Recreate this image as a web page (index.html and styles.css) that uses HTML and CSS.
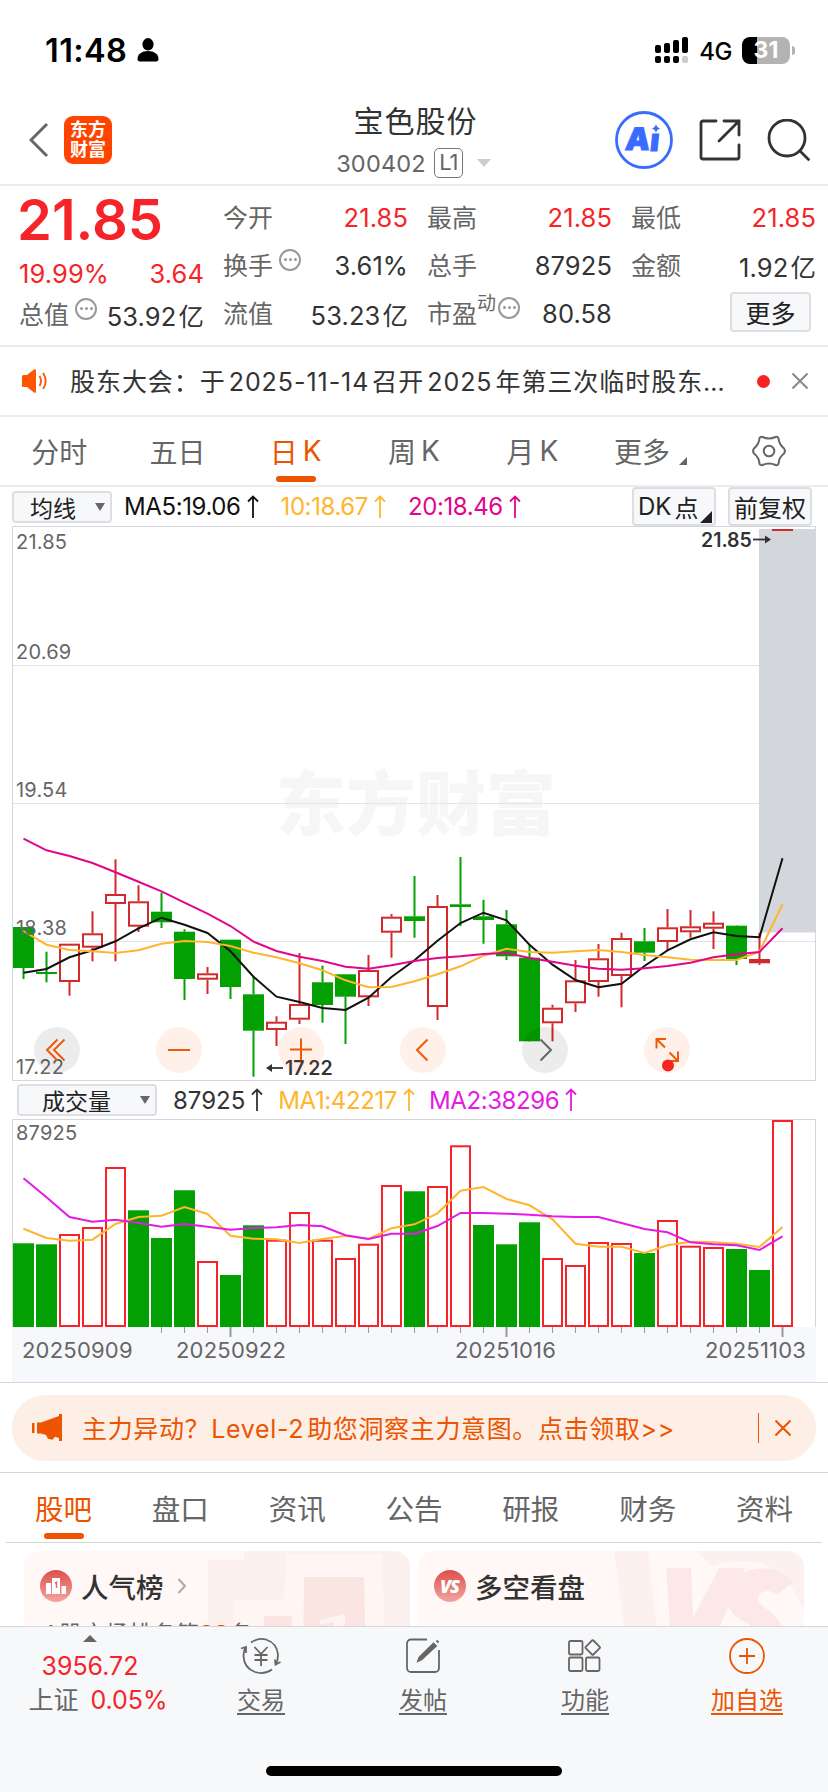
FILE: index.html
```html
<!DOCTYPE html>
<html lang="zh-CN">
<head>
    <meta charset="UTF-8">
    <meta name="viewport" content="width=device-width, initial-scale=1.0">
    <title>宝色股份 300402</title>
    <link rel="stylesheet" href="styles.css">
</head>
<body>
<div class="page">
    <!-- Status bar -->
    <div class="status">
        <span class="clock">11:48</span>
        <svg class="person" width="22" height="24" viewBox="0 0 22 24"><ellipse cx="11" cy="6.3" rx="5.6" ry="6.2"/><path d="M0.5 21c0-5 4.500-8 10.500-8s10.500 3 10.500 8c0 1.500-.8 2.500-2.500 2.500H3C1.300 23.500.5 22.500.5 21z"/></svg>
        <svg class="signal" width="34" height="27" viewBox="0 0 34 27">
            <rect x="0" y="8" width="6" height="8" rx="2"/><rect x="9" y="6" width="6" height="10" rx="2"/><rect x="18" y="3" width="6" height="13" rx="2"/><rect x="27" y="0" width="6" height="16" rx="2"/>
            <rect x="0" y="19" width="6" height="7" rx="2"/><rect x="9" y="19" width="6" height="7" rx="2"/><rect x="18" y="19" width="6" height="7" rx="2"/><rect x="27" y="19" width="6" height="7" rx="2" fill="#ccc"/>
        </svg>
        <span class="net">4G</span>
        <span class="battery">31</span>
        <span class="battery-cap"></span>
    </div>

    <!-- Header -->
    <header class="header">
        <svg class="back" width="20" height="36" viewBox="0 0 20 36"><path d="M18 2L2 18l16 16"/></svg>
        <div class="logo"><span>东方</span><span>财富</span></div>
        <div class="title">
            <h1>宝色股份</h1>
            <div class="code">300402<span class="level">L1</span><i class="caret"></i></div>
        </div>
        <svg class="ai" width="58" height="58" viewBox="0 0 58 58">
            <circle cx="29" cy="29" r="27.500" fill="none" stroke="#3a6bff" stroke-width="2.800"/>
            <g transform="translate(4.500) skewX(-6)"><text x="9" y="39">A</text><text x="34" y="40">ı</text></g>
            <path d="M41 13q.8 3.600 4.500 4.500-3.700.9-4.500 4.500-.8-3.600-4.500-4.500 3.700-.9 4.500-4.500z" fill="#3a6bff"/>
        </svg>
        <svg class="share" width="42" height="42" viewBox="0 0 42 42"><path d="M17 2H4a2 2 0 0 0-2 2v34a2 2 0 0 0 2 2h34a2 2 0 0 0 2-2V26M25 2h15v14M39 3L20 22"/></svg>
        <svg class="search" width="44" height="42" viewBox="0 0 44 42"><circle cx="20" cy="19" r="18"/><path d="M33 32l8.500 8.500"/></svg>
    </header>

    <!-- Quote -->
    <section class="quote">
        <div class="col first">
            <div class="price">21.85</div>
            <div class="row up"><span>19.99%</span><span>3.64</span></div>
            <div class="row"><label>总值<i class="tip"></i></label><b>53.92<em>亿</em></b></div>
        </div>
        <div class="col">
            <div class="row up"><label>今开</label><b>21.85</b></div>
            <div class="row"><label>换手<i class="tip"></i></label><b>3.61%</b></div>
            <div class="row"><label>流值</label><b>53.23<em>亿</em></b></div>
        </div>
        <div class="col">
            <div class="row up"><label>最高</label><b>21.85</b></div>
            <div class="row"><label>总手</label><b>87925</b></div>
            <div class="row"><label>市盈<sup>动</sup><i class="tip near"></i></label><b>80.58</b></div>
        </div>
        <div class="col">
            <div class="row up"><label>最低</label><b>21.85</b></div>
            <div class="row"><label>金额</label><b>1.92<em>亿</em></b></div>
            <div class="row end"><button class="more">更多</button></div>
        </div>
    </section>

    <!-- Notice -->
    <section class="notice">
        <svg width="28" height="24" viewBox="0 0 28 24"><path d="M1 7.500Q1 6 2.500 6H6l7-5.500q2-1 2 1v21q0 2-2 1L6 18H2.500Q1 18 1 16.500z" fill="#ff5500"/><path d="M18.500 7q3 5 0 10M22 4q5.500 8 0 16" fill="none" stroke="#ff5500" stroke-width="1.800"/></svg>
        <p>股东大会：于<span>2025-11-14</span>召开<span>2025</span>年第三次临时股东…</p>
        <i class="dot"></i>
        <svg class="close" width="16" height="16" viewBox="0 0 16 16"><path d="M.5.5l15 15M15.500.5l-15 15"/></svg>
    </section>

    <!-- Period tabs -->
    <nav class="periods">
        <a>分时</a>
        <a>五日</a>
        <a class="active">日<span>K</span></a>
        <a>周<span>K</span></a>
        <a>月<span>K</span></a>
        <a>更多<i class="corner"></i></a>
        <a><svg width="34" height="32" viewBox="0 0 34 32"><path d="M10.500 2Q17 5 23.500 2 25.500 1.200 26.500 3.200 27 9.500 31.800 13.200 34 16 31.800 18.800 27 22.500 26.500 28.800 25.500 30.800 23.500 30 17 27 10.500 30 8.500 30.800 7.500 28.800 7 22.500 2.200 18.800 0 16 2.200 13.200 7 9.500 7.500 3.200 8.500 1.200 10.500 2z"/><circle cx="17" cy="16" r="5.300"/></svg></a>
    </nav>

    <!-- K line -->
    <div class="ma-bar">
        <span class="select">均线<i></i></span>
        <span class="ma5">MA5:19.06<svg class="arrow" viewBox="0 0 12 24"><path d="M6 23V1.500M1 6.500l5-5 5 5"/></svg></span>
        <span class="ma10">10:18.67<svg class="arrow" viewBox="0 0 12 24"><path d="M6 23V1.500M1 6.500l5-5 5 5"/></svg></span>
        <span class="ma20">20:18.46<svg class="arrow" viewBox="0 0 12 24"><path d="M6 23V1.500M1 6.500l5-5 5 5"/></svg></span>
        <button class="dk">DK<span>点</span><i></i></button>
        <button class="fq">前复权</button>
    </div>
    <div class="kline">
        <svg id="kline" width="804" height="555" viewBox="0 0 804 555"></svg>
        <div class="tools">
            <span class="off"><svg viewBox="0 0 46 46"><path d="M23.500 12.500L13 23l10.500 10.500M30.500 12.500L20 23l10.500 10.500"/></svg></span>
            <span><svg viewBox="0 0 46 46"><path d="M12 23h22"/></svg></span>
            <span><svg viewBox="0 0 46 46"><path d="M12 22.500h22M23 11.500v22"/></svg></span>
            <span><svg viewBox="0 0 46 46"><path d="M27.500 12.500L17 23l10.500 10.500"/></svg></span>
            <span class="off next"><svg viewBox="0 0 46 46"><path d="M18.500 12.500L29 23 18.500 33.500"/></svg></span>
            <span><svg viewBox="0 0 46 46"><path d="M12.500 21.500v-9.500H22M13 12.500l8 8M34 24.500V34h-9.500M33.500 33.500l-8-8"/><circle cx="24" cy="38.500" r="6" fill="#f62420" stroke="none"/></svg></span>
        </div>
    </div>

    <!-- Volume -->
    <div class="vol-bar">
        <span class="select">成交量<i></i></span>
        <span class="vol">87925<svg class="arrow" viewBox="0 0 12 24"><path d="M6 23V1.500M1 6.500l5-5 5 5"/></svg></span>
        <span class="ma10">MA1:42217<svg class="arrow" viewBox="0 0 12 24"><path d="M6 23V1.500M1 6.500l5-5 5 5"/></svg></span>
        <span class="vol2">MA2:38296<svg class="arrow" viewBox="0 0 12 24"><path d="M6 23V1.500M1 6.500l5-5 5 5"/></svg></span>
    </div>
    <div class="volume">
        <svg id="volume" width="804" height="263" viewBox="0 0 804 263"></svg>
    </div>

    <!-- Promo -->
    <section class="promo">
        <div class="pill">
            <svg width="32" height="28" viewBox="0 0 32 28"><path d="M0 9h2.500v10H0zM5 8.500h4L27 2V0h3v27h-3v-3l-4-1.300-2.500 3-4.500-1-2-3.700L9 19.500H5z" fill="#ec5400"/></svg>
            <p>主力异动？<span>Level-2</span>助您洞察主力意图。点击领取&gt;&gt;</p>
            <i></i>
            <svg class="close" width="16" height="16" viewBox="0 0 16 16"><path d="M.5.5l15 15M15.500.5l-15 15"/></svg>
        </div>
    </section>

    <!-- Info tabs -->
    <nav class="info">
        <a class="active">股吧</a>
        <a>盘口</a>
        <a>资讯</a>
        <a>公告</a>
        <a>研报</a>
        <a>财务</a>
        <a>资料</a>
    </nav>

    <div class="cards">
        <div class="card">
            <svg class="art" width="386" height="120" viewBox="0 0 386 120">
                <path d="M184 9h36V0h166v120H210V49h50V3h96v117h-60V49h-86v71h-26z" fill="#fdf1ef"/>
                <path d="M262 3h96l4 117H210V49h50z" fill="#fff5f2"/>
                <path d="M280 26h60l2 94h-63zM240 65h28v55h-28z" fill="#fae5e3"/>
                <path d="M296 69l25-6v57h-11V71l-14 3z" fill="#fdf3f1"/>
            </svg>
            <h3>
                <svg width="32" height="32" viewBox="0 0 32 32"><circle cx="16" cy="16" r="16" fill="url(#badge)"/><path d="M6 13h5v11H6zM12 8h8v16h-8zM21.500 16h4.500v8h-4.500z" fill="#fff"/><path d="M15 13l1.500-.7V18" fill="none" stroke="#e06a66" stroke-width="1.500"/></svg>
                人气榜
                <svg class="go" width="10" height="18" viewBox="0 0 10 18"><path d="M1.500 2l6.500 7-6.500 7"/></svg>
            </h3>
            <p>A股市场排名第<b>28</b>名</p>
        </div>
        <div class="card">
            <svg class="art" width="386" height="120" viewBox="0 0 386 120">
                <path d="M196 0h34l14 120h-32zM278 0h108v60q-20-50-60-50-20 0-32 6z" fill="#fdf1ef"/>
                <path d="M248 17h25l2 50 26-50h26l-44 103h-28z" fill="#fce9e7"/>
                <path d="M375 31q-15-17-38-13-27 4-28 28-1 17 20 26 9 5 2 14l-22 12v20h40q20-12 16-38-3-13-19-24-10-7-3-14 8-5 16 2z" fill="#fce9e7"/>
            </svg>
            <h3>
                <svg width="32" height="32" viewBox="0 0 32 32">
                    <defs><linearGradient id="badge" x1="0" y1="0" x2="0" y2="1"><stop offset="0" stop-color="#dc4f4b"/><stop offset="1" stop-color="#f3a5a1"/></linearGradient></defs>
                    <circle cx="16" cy="16" r="16" fill="url(#badge)"/><text x="15.500" y="23" class="vs">VS</text>
                </svg>
                多空看盘
            </h3>
        </div>
    </div>

    <!-- Bottom bar -->
    <footer class="bottom">
        <div class="index">
            <i></i>
            <div class="up">3956.72</div>
            <div class="line">上证 <span class="up">0.05%</span></div>
        </div>
        <a>
            <svg width="42" height="38" viewBox="0 0 42 38"><path d="M11 5.500Q18 .5 26 2.500 37.500 6.500 38 18q0 5-2 9M32 32.500Q24 38 15 35 4 31 3.500 19q0-4 1.500-8M1 11.500l5-1.500v6M40.500 25l-5 2.500-.5-5M14.500 10l6.500 7 6.500-7M21 17v12M14.500 18h13M14.500 23h13"/></svg>
            <span>交易</span>
        </a>
        <a>
            <svg width="42" height="38" viewBox="0 0 42 38"><path d="M25 2.500H9a4 4 0 0 0-4 4V31a4 4 0 0 0 4 4h24a4 4 0 0 0 4-4V13"/><path d="M31.500 6.500l2.500 2.500L19.500 22.500 16 24l1.500-3.800zM34.500 3.500l2 2" fill="#666"/></svg>
            <span>发帖</span>
        </a>
        <a>
            <svg width="42" height="38" viewBox="0 0 42 38"><rect x="5" y="4" width="13.500" height="13.500" rx="1.500"/><rect x="5" y="20.500" width="13.500" height="13.500" rx="1.500"/><rect x="22" y="20.500" width="13.500" height="13.500" rx="1.500"/><path d="M28 3.500q.7-.7 1.400 0l6.300 6.300q.7.7 0 1.400l-6.300 6.300q-.7.7-1.400 0l-6.300-6.300q-.7-.7 0-1.400z"/></svg>
            <span>功能</span>
        </a>
        <a class="add">
            <svg width="42" height="38" viewBox="0 0 42 38"><circle cx="21" cy="19" r="17"/><path d="M13 19h16M21 11v16"/></svg>
            <span>加自选</span>
        </a>
        <div class="home"></div>
    </footer>
</div>
<script src="chart.js"></script>
</body>
</html>
```
FILE: styles.css
```css
* {
    box-sizing: border-box;
}

body {
    margin: 0;
    background: #fff;
    color: #333;
    font-family: Inter, "Noto Sans CJK SC", sans-serif;
    font-size: 25px;
}

h1, h3, p {
    margin: 0;
    font-weight: 400;
}

b, em, i {
    font-weight: 400;
    font-style: normal;
}

button {
    font: inherit;
    color: #222;
    padding: 0;
    background: #f7f8fa;
    border: 2px solid #dcdee3;
    border-radius: 4px;
}

svg {
    display: block;
    flex: none;
}

.page {
    display: flex;
    flex-direction: column;
    width: 828px;
    height: 1792px;
    overflow: hidden;
}

.page > * {
    flex: none;
}

.up, .up b {
    color: #f62429;
}

/* status bar */
.status {
    display: flex;
    align-items: center;
    height: 100px;
    padding: 0 33px 0 45px;
    color: #000;
}

.clock {
    font-size: 32.500px;
    font-weight: 600;
    width: 92px;
    letter-spacing: 0.4px;
}

.signal {
    margin-left: auto;
}

.net {
    margin: 2px 10px 0 10px;
    font-size: 24px;
    font-weight: 500;
    letter-spacing: -0.5px;
}

.battery {
    width: 48px;
    height: 27px;
    border-radius: 8px;
    background: linear-gradient(90deg, #000 31%, #b3b3b3 31%);
    color: #fff;
    font-size: 23px;
    font-weight: 700;
    line-height: 27px;
    text-align: center;
}

.battery-cap {
    width: 3px;
    height: 9px;
    margin-left: 2px;
    border-radius: 0 4px 4px 0;
    background: #b3b3b3;
}

/* header */
.header {
    display: flex;
    align-items: center;
    height: 86px;
    padding: 0 17px 4px 29px;
    border-bottom: 2px solid #ececee;
}

.back {
    fill: none;
    stroke: #666;
    stroke-width: 3;
}

.logo {
    display: flex;
    flex-direction: column;
    justify-content: center;
    width: 48px;
    height: 48px;
    margin-left: 15px;
    border-radius: 9px;
    background: #ff4400;
    color: #fff;
    font-size: 18px;
    font-weight: 700;
    line-height: 20px;
    text-align: center;
}

.title {
    flex: 1;
    padding: 8px 0 0 108px;
    text-align: center;
}

.title h1 {
    font-size: 30px;
    line-height: 38px;
    letter-spacing: 1px;
    margin-left: -4px;
}

.code {
    display: flex;
    justify-content: center;
    align-items: center;
    height: 46px;
    margin-left: -8px;
    font-size: 23.500px;
    color: #666;
    letter-spacing: 0.2px;
}

.level {
    width: 29px;
    height: 30px;
    margin: 0 14px 0 8px;
    border: 1.500px solid #777;
    border-radius: 5px;
    font-size: 22px;
    line-height: 27px;
    letter-spacing: -1px;
}

.caret {
    border: 7px solid transparent;
    border-top: 8px solid #ccc;
    border-bottom: 0;
}

.ai text {
    font-family: Inter, sans-serif;
    font-size: 31px;
    font-weight: 900;
    fill: #3a6bff;
    stroke: #3a6bff;
    stroke-width: 1;
}

.share, .search {
    margin-left: 26px;
    fill: none;
    stroke: #333;
    stroke-width: 2.800;
    stroke-linecap: round;
}

/* quote */
.quote {
    display: grid;
    grid-template-columns: repeat(4, 184px);
    column-gap: 20px;
    height: 161px;
    padding: 7px 13px 0 19px;
    border-bottom: 2px solid #ececee;
}

.row {
    display: flex;
    justify-content: space-between;
    align-items: center;
    height: 48px;
    white-space: nowrap;
}

.row b, .row > span {
    margin-right: -1px;
    font-size: 25.500px;
    letter-spacing: 0.1px;
}

.row label {
    display: flex;
    align-items: center;
    margin-top: -2px;
    color: #666;
}

.row em {
    margin-left: 2px;
}

.price {
    height: 56px;
    margin-left: -2px;
    color: #f62429;
    font-size: 56px;
    font-weight: 600;
    line-height: 54px;
}

.first .row:last-child {
    height: 34px;
}

.row sup {
    align-self: flex-start;
    font-size: 19px;
    line-height: 20px;
}

.tip {
    display: grid;
    place-items: center;
    width: 22px;
    height: 22px;
    margin: -9px 0 0 6px;
    border: 2px solid #999;
    border-radius: 50%;
}

.tip::before {
    content: "";
    width: 3px;
    height: 3px;
    border-radius: 50%;
    background: #999;
    box-shadow: -5px 0 #999, 5px 0 #999;
}

.tip.near {
    margin-left: 2px;
}

.row.end {
    justify-content: flex-end;
}

.more {
    width: 81px;
    height: 40px;
    margin: -3px 4px 0 0;
}

/* notice */
.notice {
    display: flex;
    align-items: center;
    height: 70px;
    padding: 0 20px 0 21px;
    border-bottom: 2px solid #ececee;
}

.notice p {
    width: 665px;
    margin: -2px 0 0 21px;
    letter-spacing: 0.950px;
    white-space: nowrap;
}

.notice p span {
    margin: 0 3px;
}

.dot {
    width: 13px;
    height: 13px;
    margin: 0 auto 0 22px;
    border-radius: 50%;
    background: #f62420;
}

.close {
    fill: none;
    stroke: #888;
    stroke-width: 2;
}

/* tabs */
.periods {
    display: grid;
    grid-template-columns: repeat(7, 1fr);
    height: 70px;
    border-bottom: 2px solid #ececee;
    font-size: 28px;
    color: #666;
}

.periods a, .info a {
    position: relative;
    display: flex;
    align-items: center;
    justify-content: center;
}

.periods a span {
    margin-left: 5px;
}

.periods svg {
    fill: none;
    stroke: #666;
    stroke-width: 2;
}

.corner {
    margin: 19px 0 0 9px;
    border: 4.500px solid #666;
    border-top-color: transparent;
    border-left-color: transparent;
}

a.active {
    color: #ec5400;
}

a.active::after {
    content: "";
    position: absolute;
    left: 50%;
    bottom: 3px;
    width: 40px;
    height: 6px;
    margin-left: -20px;
    border-radius: 3px;
    background: #ec5400;
}

/* indicator bars */
.ma-bar, .vol-bar {
    display: flex;
    align-items: center;
    height: 39px;
    padding: 0 16px 0 12px;
    font-size: 24px;
    letter-spacing: -0.4px;
    white-space: nowrap;
}

.vol-bar {
    height: 38px;
    padding-left: 17px;
}

.ma-bar > span, .vol-bar > span {
    display: flex;
    align-items: center;
}

.select {
    width: 100px;
    height: 32px;
    padding-left: 16px;
    background: #f7f8fa;
    border: 2px solid #dcdee3;
    border-radius: 4px;
    color: #222;
    font-size: 23px;
    letter-spacing: 0;
}

.vol-bar .select {
    width: 140px;
    padding-left: 23px;
}

.select i {
    margin: 0 5px 0 auto;
    border: 5px solid transparent;
    border-top: 8px solid #666;
    border-bottom: 0;
}

.arrow {
    width: 12px;
    height: 24px;
    margin-left: 6px;
    fill: none;
    stroke: currentColor;
    stroke-width: 1.800;
}

.ma5 { color: #111; margin-left: 12px; }
.ma10 { color: #ffb52e; margin-left: 22px; }
.ma20 { color: #e2068a; margin-left: 22px; }
.vol { margin-left: 16px; letter-spacing: 0; }
.vol-bar .ma10 { margin-left: 15px; }
.vol2 { color: #e31be3; margin-left: 14px; }

.ma-bar button {
    height: 39px;
    width: 84px;
    letter-spacing: 0;
}

.ma-bar .dk {
    display: flex;
    align-items: center;
    margin: 0 12px 0 auto;
    padding-left: 4px;
}

.dk span {
    margin-left: 3px;
}

.dk i {
    margin: 20px 0 0 2px;
    border: 6px solid #222;
    border-top-color: transparent;
    border-left-color: transparent;
}

/* charts */
.kline {
    position: relative;
    height: 555px;
    margin-left: 12px;
}

.tools {
    position: absolute;
    left: 22px;
    top: 501px;
    display: flex;
    gap: 76px;
}

.tools span {
    width: 46px;
    height: 46px;
    border-radius: 50%;
    background: rgba(255, 110, 40, 0.1);
}

.tools .off {
    background: rgba(0, 0, 0, 0.075);
}

.tools svg {
    fill: none;
    stroke: #ee5a0a;
    stroke-width: 2;
}

.tools .next svg {
    stroke: #666;
}

.volume {
    height: 264px;
    padding-left: 12px;
    border-bottom: 1px solid #d5d6dc;
}

.frame { fill: none; stroke: #d5d6dc; }
.grid { stroke: #e4e4e8; }
.scale { fill: #666; font-size: 20px; letter-spacing: 0.2px; }
.date { fill: #666; font-size: 22px; letter-spacing: 0.2px; }
.mark { fill: #333; font-size: 19.500px; font-weight: 600; }
.pointer { fill: none; stroke: #333; stroke-width: 1.800; }
.watermark { fill: #f6f6f6; font-size: 70px; font-weight: 900; }
.ma { fill: none; stroke-width: 2; }

/* promo */
.promo {
    height: 90px;
    padding: 12px;
    border-bottom: 1px solid #d5d6dc;
}

.pill {
    display: flex;
    align-items: center;
    height: 66px;
    padding: 0 25px 0 20px;
    border-radius: 33px;
    background: #fdeee6;
    color: #ec5400;
}

.pill p {
    margin: -2px 0 0 18px;
    letter-spacing: 0.650px;
    white-space: nowrap;
}

.pill p span {
    margin: 0 3px 0 1px;
}

.pill i {
    width: 1px;
    height: 30px;
    margin: 0 16px 0 auto;
    background: #ec5400;
}

.pill .close {
    stroke: #ec5400;
}

/* info */
.info {
    display: flex;
    justify-content: space-between;
    height: 70px;
    margin: 0 6px;
    padding: 0 29px;
    border-bottom: 1px solid #d5d6dc;
    font-size: 28.500px;
    color: #666;
}

.cards {
    display: flex;
    gap: 8px;
    height: 83px;
    padding: 8px 24px 0;
    overflow: hidden;
}

.card {
    position: relative;
    width: 386px;
    height: 120px;
    padding: 15px 16px;
    border-radius: 16px;
    background: #fff8f6;
    overflow: hidden;
}

.art {
    position: absolute;
    left: 0;
    top: 0;
}

.card h3 {
    position: relative;
    display: flex;
    align-items: center;
    gap: 9px;
    height: 40px;
    font-size: 27.500px;
    font-weight: 500;
}

.go {
    margin-left: 4px;
    fill: none;
    stroke: #aaa;
    stroke-width: 2;
}

.vs {
    font: italic 900 18px "Open Sans", Inter, sans-serif;
    letter-spacing: -1px;
    fill: #fff;
    text-anchor: middle;
}

.card p {
    position: relative;
    margin: 9px 0 0 3px;
    color: #666;
    font-size: 23px;
    letter-spacing: 0.3px;
}

.card p b {
    color: #ec4a10;
    font-weight: 700;
}

/* bottom bar */
.bottom {
    position: relative;
    display: grid;
    grid-template-columns: 180px repeat(4, 162px);
    height: 166px;
    border-top: 1px solid #d5d6dc;
    background: #f7f8fa;
    color: #666;
}

.index {
    display: flex;
    flex-direction: column;
    align-items: center;
    padding-top: 8px;
}

.index i {
    border: 7px solid transparent;
    border-bottom: 7px solid #666;
    border-top: 0;
}

.index div {
    height: 34px;
    line-height: 34px;
    margin-top: 7px;
}

.index .line {
    display: flex;
    gap: 12px;
    margin: 0 0 0 16px;
}

.bottom a {
    display: flex;
    flex-direction: column;
    align-items: center;
    padding-top: 10px;
    font-size: 24px;
}

.bottom a svg {
    fill: none;
    stroke: #666;
    stroke-width: 1.800;
}

.bottom a span {
    margin-top: 13px;
    line-height: 25px;
    border-bottom: 2px solid;
}

.bottom .add {
    color: #ec5400;
}

.bottom .add svg {
    stroke: #ec5400;
}

.home {
    position: absolute;
    left: 266px;
    bottom: 16px;
    width: 296px;
    height: 10px;
    border-radius: 5px;
    background: #000;
}
```
FILE: chart.js
```js
const STEP = 23;
const BAR = 21;
const RED = '#d2292d';
const GREEN = '#02a002';

// [up, body top, body bottom, high, low]
const candles = [
    [0, 401, 442, 401, 453], [0, 446, 448, 425.7, 456.3], [1, 417.7, 456, 417.7, 469.7], [1, 407.3, 421.7, 385.3, 435.3],
    [1, 368, 378, 333.3, 435.3], [1, 375.3, 400.7, 359.3, 406], [0, 385.7, 396.3, 366.7, 402], [0, 405.7, 453, 403.3, 474],
    [1, 447.3, 453.7, 441, 468], [0, 413.7, 461, 413.7, 473], [0, 468.3, 504.7, 450.7, 550.7], [1, 495.7, 504, 490.3, 520],
    [1, 478, 493.7, 427, 498], [0, 456.3, 479, 439.7, 496.7], [0, 448.3, 470.7, 448.3, 518], [1, 444, 471.3, 429, 480],
    [1, 390.7, 406.7, 388, 431.7], [0, 390.3, 395, 350, 411.7], [1, 380, 481, 369, 494], [0, 378.3, 381, 331, 400],
    [0, 390.3, 394, 373.7, 417.7], [0, 398.3, 430.3, 384, 434], [0, 431.7, 515.3, 419, 515.7], [1, 481.7, 497.3, 478.7, 515.3],
    [1, 454.3, 477.3, 434, 486], [1, 432.3, 456, 418, 470.7], [1, 412, 450, 406.7, 481.3], [0, 415.3, 426.7, 402, 435],
    [1, 401.3, 416, 383, 424.7], [1, 400.3, 406.3, 384, 411.7], [1, 396.7, 402.7, 385.3, 423], [0, 399.7, 433, 399.3, 439],
    [1, 433, 437.3, 406.7, 439], [1, 3, 5, 3, 5]
];
const ma5 = [446.7, 443, 431.3, 424.3, 415.3, 402.3, 391.7, 398.7, 407, 425.3, 450.7, 470.7, 476, 482, 484, 471.7, 451, 434.3, 414.7, 397, 386.7, 394.3, 418.7, 438.7, 454, 461.3, 457.7, 440, 424.3, 413.3, 406.3, 410, 411.3, 332.3];
const ma10 = [405, 418.7, 424, 425.3, 427, 424.3, 417.7, 415, 416, 420, 426.7, 431.3, 437.3, 444.3, 454.3, 461.3, 461, 455.3, 448.3, 440.3, 429.7, 422.7, 426, 426.7, 425.3, 424, 426, 429, 431.3, 433.7, 434, 434, 425.7, 378.3];
const ma20 = [312.7, 324.3, 330, 337, 346.3, 355.7, 365.3, 376.7, 387.7, 400, 415.7, 425, 430.7, 435, 440.7, 442.7, 439.3, 435, 432, 430.3, 428, 427, 432, 435.7, 439.7, 442.7, 443.7, 442.3, 440, 436.7, 431.3, 428.3, 426, 402.3];

const volumes = [124.3, 125.3, 115, 108, 48, 91.3, 119, 71.3, 142, 156, 106.3, 120.7, 93, 120.7, 139, 124.7, 66, 72.3, 67, 26.3, 106, 125.3, 103.3, 139, 146, 123, 124, 134, 101, 126.7, 128, 130, 151, 1];
const downDays = [0, 1, 5, 6, 7, 9, 10, 17, 20, 21, 22, 27, 31, 32];
const vma1 = [109.7, 119, 121.7, 120.7, 105, 98, 96.7, 88, 95, 116.7, 119.7, 120.3, 124, 120, 116.7, 120, 109.3, 105.3, 94.3, 71.7, 68, 80, 86.3, 100.3, 124.7, 127.7, 127.7, 134, 126.3, 122.7, 123.3, 124.7, 128, 108];
const vma2 = [59.3, 78.3, 98, 102.7, 100.7, 104, 107.7, 105, 107.7, 110.7, 109, 108.3, 106, 107.3, 116.3, 120, 114.7, 114.7, 107, 94, 94, 94.7, 95.7, 97.3, 98, 98, 104, 110, 113.3, 123.3, 125.3, 126.3, 131, 117.3];

const cx = i => 11.5 + i * STEP;

function line(values, color) {
    const pts = values.map((y, i) => cx(i) + ',' + y).join(' ');
    return `<polyline class="ma" stroke="${color}" points="${pts}"/>`;
}

function bar(i, top, bottom, up, color) {
    const x = cx(i) - BAR / 2;
    if (up && bottom - top > 5) {
        return `<rect x="${x + 1}" y="${top + 1}" width="${BAR - 2}" height="${bottom - top - 2}" fill="none" stroke="${color}" stroke-width="2"/>`;
    }
    return `<rect x="${x}" y="${top}" width="${BAR}" height="${bottom - top}" fill="${color}"/>`;
}

function drawKline() {
    let s = '<text class="watermark" x="264" y="304">东方财富</text>';
    [139.5, 277.5, 415.5].forEach(y => {
        s += `<path class="grid" d="M0 ${y}H804"/>`;
    });
    s += '<rect x="747" y="3" width="57" height="403.5" fill="#d3d6db"/>';
    s += '<rect class="frame" x=".5" y=".5" width="803" height="554"/>';
    candles.forEach(([up, top, bottom, high, low], i) => {
        const color = up ? RED : GREEN;
        if (high < top) s += `<path d="M${cx(i)} ${high}V${top}" stroke="${color}" stroke-width="2"/>`;
        if (low > bottom) s += `<path d="M${cx(i)} ${bottom}V${low}" stroke="${color}" stroke-width="2"/>`;
        s += bar(i, top, bottom, up, color);
    });
    s += line(ma5, '#111') + line(ma10, '#ffb52e') + line(ma20, '#e2068a');
    [['21.85', 23], ['20.69', 133], ['19.54', 271], ['18.38', 409], ['17.22', 548]].forEach(([t, y]) => {
        s += `<text class="scale" x="4" y="${y}">${t}</text>`;
    });
    s += '<text class="mark" x="689" y="21">21.85</text><path class="pointer" d="M741 13.5H757"/><path d="M753 9.5l6 4-6 4z" fill="#333"/>';
    s += '<text class="mark" x="273" y="549">17.22</text><path class="pointer" d="M257 542H271"/><path d="M260 538l-6 4 6 4z" fill="#333"/>';
    document.getElementById('kline').innerHTML = s;
}

function drawVolume() {
    let s = '<rect y="208" width="804" height="55" fill="#f7f8fb"/>';
    s += '<path class="frame" d="M.5 208V.5H803.5V208"/>';
    volumes.forEach((top, i) => {
        const up = !downDays.includes(i);
        s += bar(i, top, 208, up, up ? '#f62429' : GREEN);
        if (i > 5) {
            const major = i === 9 || i === 21 || i === 33;
            s += `<path d="M${cx(i)} 208v${major ? 10 : 6}" stroke="#999" stroke-width="${major ? 2 : 1}"/>`;
        }
    });
    s += line(vma1, '#ffb52e') + line(vma2, '#e31be3');
    s += '<text class="scale" x="4" y="21">87925</text>';
    [['20250909', 10], ['20250922', 164], ['20251016', 443], ['20251103', 693]].forEach(([t, x]) => {
        s += `<text class="date" x="${x}" y="239">${t}</text>`;
    });
    document.getElementById('volume').innerHTML = s;
}

drawKline();
drawVolume();
```
